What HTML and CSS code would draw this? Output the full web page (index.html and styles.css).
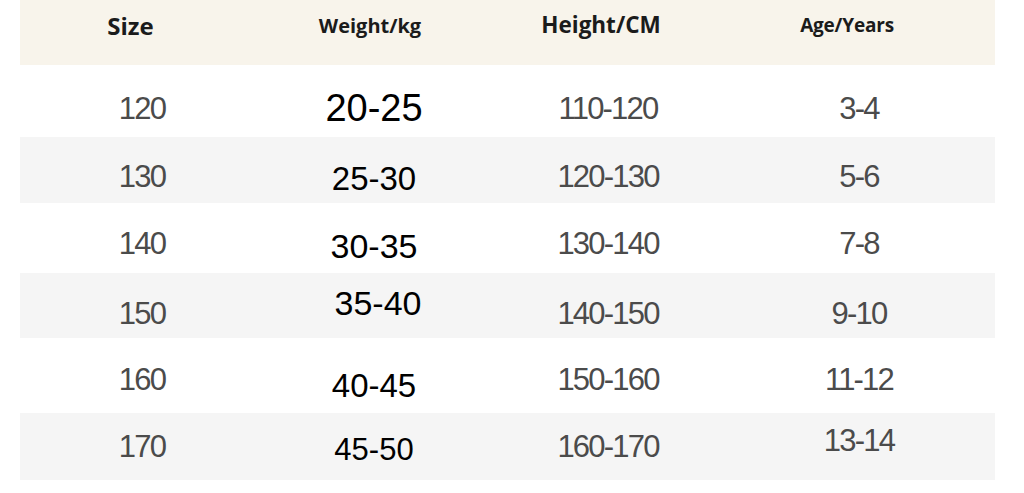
FILE: index.html
```html
<!DOCTYPE html>
<html lang="en">
<head>
<meta charset="utf-8">
<title>Size Chart</title>
<link rel="stylesheet" href="styles.css">
</head>
<body>
<div class="chart">
  <div class="row head">
    <div class="cell h-size">Size</div>
    <div class="cell h-weight">Weight/kg</div>
    <div class="cell h-height">Height/CM</div>
    <div class="cell h-age">Age/Years</div>
  </div>
  <div class="row r1">
    <div class="cell size">120</div>
    <div class="cell weight">20-25</div>
    <div class="cell height">110-120</div>
    <div class="cell age">3-4</div>
  </div>
  <div class="row r2 alt">
    <div class="cell size">130</div>
    <div class="cell weight">25-30</div>
    <div class="cell height">120-130</div>
    <div class="cell age">5-6</div>
  </div>
  <div class="row r3">
    <div class="cell size">140</div>
    <div class="cell weight">30-35</div>
    <div class="cell height">130-140</div>
    <div class="cell age">7-8</div>
  </div>
  <div class="row r4 alt">
    <div class="cell size">150</div>
    <div class="cell weight">35-40</div>
    <div class="cell height">140-150</div>
    <div class="cell age">9-10</div>
  </div>
  <div class="row r5">
    <div class="cell size">160</div>
    <div class="cell weight">40-45</div>
    <div class="cell height">150-160</div>
    <div class="cell age">11-12</div>
  </div>
  <div class="row r6 alt">
    <div class="cell size">170</div>
    <div class="cell weight">45-50</div>
    <div class="cell height">160-170</div>
    <div class="cell age">13-14</div>
  </div>
</div>
</body>
</html>
```

FILE: styles.css
```css
html, body {
  margin: 0;
  padding: 0;
  background: #ffffff;
}

.chart {
  margin-left: 20px;
  width: 975px;
}

.row {
  display: grid;
  grid-template-columns: 244px 220px 248px 263px;
  align-items: center;
  box-sizing: border-box;
}

.cell {
  text-align: center;
  line-height: 1;
  white-space: nowrap;
}

/* header */
.head {
  height: 65px;
  padding-bottom: 14px;
  background: #f8f4eb;
  font-family: "Open Sans", "Noto Sans", sans-serif;
  font-weight: 700;
  color: #1b1b1b;
}
.h-size { font-size: 24px; padding-right: 23px; }
.h-weight { font-size: 20px; padding-right: 8px; }
.h-height { font-size: 22.5px; padding-right: 14px; }
.h-age { font-size: 19px; padding-right: 33px; letter-spacing: -0.2px; }

/* body rows */
.alt { background: #f5f5f5; }

.size, .height, .age {
  font-family: "Liberation Sans", Arial, sans-serif;
  font-size: 31px;
  letter-spacing: -1.8px;
  color: #4b4b4b;
}
.age { padding-right: 9px; }

.weight {
  font-family: "Liberation Sans", Arial, sans-serif;
  color: #000000;
}

.r1 { height: 72px; padding-top: 14px; }
.r2 { height: 66px; padding-top: 12px; }
.r3 { height: 70px; padding-top: 10px; }
.r4 { height: 65px; padding-top: 13px; }
.r5 { height: 75px; padding-top: 8px; }
.r6 { height: 67px; padding-top: 0; }

.r1 .weight { font-size: 38px; }
.r2 .weight { font-size: 33px; margin-top: 4px; }
.r3 .weight { font-size: 34px; margin-top: 6px; }
.r4 .weight { font-size: 34px; margin-bottom: 20px; margin-left: 8px; }
.r5 .weight { font-size: 33px; margin-top: 12px; }
.r6 .weight { font-size: 31px; margin-top: 6px; }
.r6 .age { margin-bottom: 12px; }
```
